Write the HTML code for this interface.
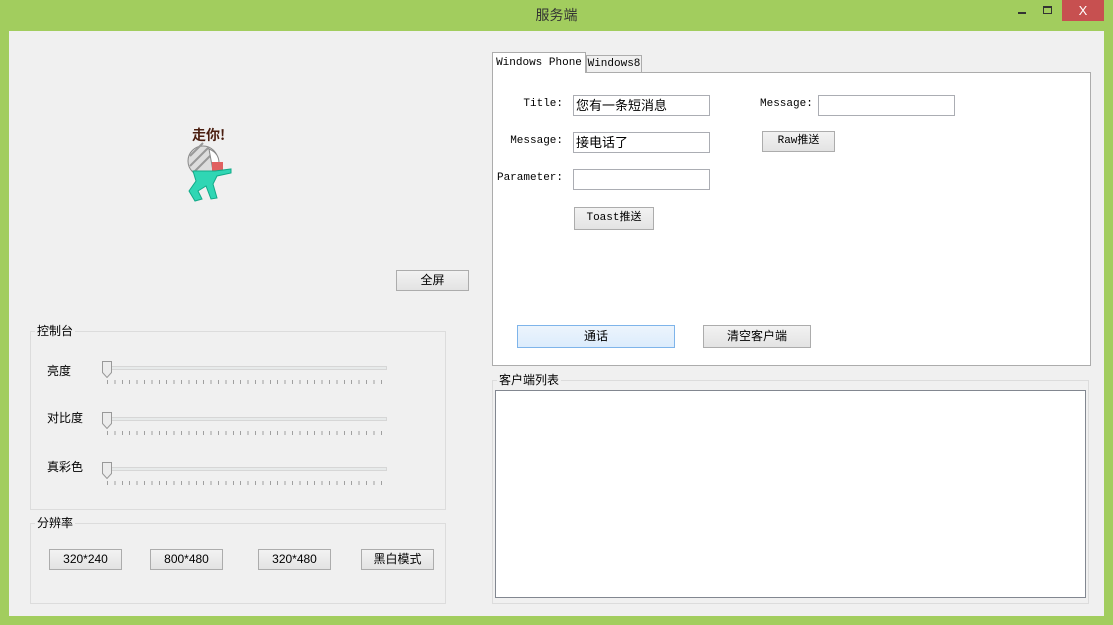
<!DOCTYPE html>
<html><head><meta charset="utf-8"><style>
*{margin:0;padding:0;box-sizing:border-box}
body{width:1113px;height:625px;background:#a2cd5e;position:relative;overflow:hidden;font-family:"Liberation Sans","Noto Sans CJK SC",sans-serif;font-size:12px;color:#000}
.a{position:absolute}
.btn{position:absolute;background:linear-gradient(#f2f2f2,#e3e3e3);border:1px solid #acacac;text-align:center;font-size:12px;line-height:18px}
.mono{font-family:"Liberation Mono","Noto Sans CJK SC",monospace;font-size:11px}
.inp{position:absolute;background:#fff;border:1px solid #abadb3;height:21px;line-height:19px;padding-left:2px;font-size:13px}
.grp{position:absolute;border:1px solid #dcdcdc}
.lg{position:absolute;background:#f0f0f0;padding:0 2px;font-size:12px}
.track{position:absolute;height:4px;background:#e7eaea;border:1px solid #d6d6d6;width:280px;left:107px}
.thumb{position:absolute;left:102px;width:10px;height:17px}
.ticks{position:absolute;left:107px;width:278px;height:4px;background:repeating-linear-gradient(90deg,#a0a0a0 0 1px,transparent 1px 7.4px)}
</style></head><body>
<div class="a" style="left:0;top:0;width:1113px;height:31px;text-align:center;line-height:31px;font-size:14px;color:#333">服务端</div>
<div class="a" style="left:1018px;top:12px;width:8px;height:2px;background:#333"></div>
<div class="a" style="left:1043px;top:6px;width:9px;height:8px;border:1px solid #333;border-top-width:2px"></div>
<div class="a" style="left:1062px;top:0;width:42px;height:21px;background:#c75050;color:#fff;text-align:center;line-height:21px;font-size:13px">X</div>
<div class="a" style="left:9px;top:31px;width:1095px;height:585px;background:#f0f0f0"></div>

<svg class="a" style="left:183px;top:124px" width="56" height="82" viewBox="0 0 56 82">
<text x="9" y="16" font-size="14" font-weight="bold" fill="#4a1e10" font-family="Noto Sans CJK SC,sans-serif">走你!</text>
<circle cx="20" cy="37" r="15" fill="#ddd" stroke="#888"/>
<path d="M7 32l13-13M7 42l19-19M11 48l18-18" stroke="#999" stroke-width="2"/>
<path d="M26 25q10 4 10 14l-6 8z" fill="#fff" stroke="#888"/>
<rect x="29" y="38" width="11" height="9" fill="#e06060"/>
<path d="M10 47h22l16-2v4l-14 3-4 8 4 14-6 1-5-13-8 5 4 8-7 2-6-10 7-10z" fill="#2fd6b4" stroke="#1a8"/>
</svg>

<div class="btn" style="left:396px;top:270px;width:73px;height:21px">全屏</div>

<div class="grp" style="left:30px;top:331px;width:416px;height:179px"></div>
<div class="lg" style="left:35px;top:322px">控制台</div>
<div class="a" style="left:47px;top:362px">亮度</div>
<div class="a" style="left:47px;top:409px">对比度</div>
<div class="a" style="left:47px;top:458px">真彩色</div>
<div class="track" style="top:366px"></div><div class="ticks" style="top:380px"></div>
<div class="track" style="top:417px"></div><div class="ticks" style="top:431px"></div>
<div class="track" style="top:467px"></div><div class="ticks" style="top:481px"></div>
<svg class="thumb" style="top:361px" viewBox="0 0 10 17"><path d="M0.5 .5h9v11l-4.5 5l-4.5-5z" fill="#ececec" stroke="#999"/></svg>
<svg class="thumb" style="top:412px" viewBox="0 0 10 17"><path d="M0.5 .5h9v11l-4.5 5l-4.5-5z" fill="#ececec" stroke="#999"/></svg>
<svg class="thumb" style="top:462px" viewBox="0 0 10 17"><path d="M0.5 .5h9v11l-4.5 5l-4.5-5z" fill="#ececec" stroke="#999"/></svg>

<div class="grp" style="left:30px;top:523px;width:416px;height:81px"></div>
<div class="lg" style="left:35px;top:514px">分辨率</div>
<div class="btn" style="left:49px;top:549px;width:73px;height:21px">320*240</div>
<div class="btn" style="left:150px;top:549px;width:73px;height:21px">800*480</div>
<div class="btn" style="left:258px;top:549px;width:73px;height:21px">320*480</div>
<div class="btn" style="left:361px;top:549px;width:73px;height:21px">黑白模式</div>

<div class="a" style="left:492px;top:72px;width:599px;height:294px;background:#fff;border:1px solid #acacac"></div>
<div class="a mono" style="left:492px;top:52px;width:94px;height:21px;background:#fff;border:1px solid #acacac;border-bottom:none;line-height:20px;text-align:center">Windows Phone</div>
<div class="a mono" style="left:586px;top:55px;width:56px;height:17px;background:#f0f0f0;border:1px solid #acacac;border-bottom:none;line-height:17px;text-align:center">Windows8</div>

<div class="a mono" style="left:493px;top:98px;width:70px;text-align:right">Title:</div>
<div class="a mono" style="left:493px;top:135px;width:70px;text-align:right">Message:</div>
<div class="a mono" style="left:493px;top:172px;width:70px;text-align:right">Parameter:</div>
<div class="a mono" style="left:760px;top:98px">Message:</div>
<div class="inp" style="left:573px;top:95px;width:137px">您有一条短消息</div>
<div class="inp" style="left:573px;top:132px;width:137px">接电话了</div>
<div class="inp" style="left:573px;top:169px;width:137px"></div>
<div class="inp" style="left:818px;top:95px;width:137px"></div>
<div class="btn mono" style="left:762px;top:131px;width:73px;height:21px;line-height:19px">Raw推送</div>
<div class="btn mono" style="left:574px;top:207px;width:80px;height:23px;line-height:21px">Toast推送</div>
<div class="btn" style="left:517px;top:325px;width:158px;height:23px;line-height:21px;background:linear-gradient(#ecf4fc,#dcecfc);border-color:#7eb4ea">通话</div>
<div class="btn" style="left:703px;top:325px;width:108px;height:23px;line-height:21px">清空客户端</div>

<div class="grp" style="left:492px;top:380px;width:597px;height:224px"></div>
<div class="lg" style="left:497px;top:371px">客户端列表</div>
<div class="a" style="left:495px;top:390px;width:591px;height:208px;background:#fff;border:1px solid #828790"></div>
</body></html>
